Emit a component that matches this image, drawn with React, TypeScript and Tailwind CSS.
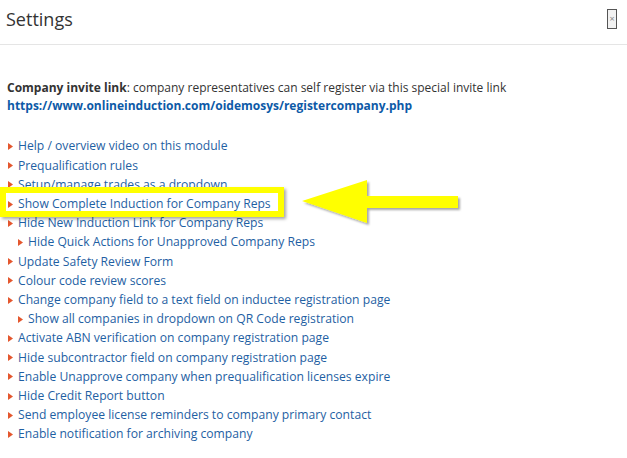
import React from "react";

type Item = { text: string; sub?: boolean };

const items: Item[] = [
  { text: "Help / overview video on this module" },
  { text: "Prequalification rules" },
  { text: "Setup/manage trades as a dropdown" },
  { text: "Show Complete Induction for Company Reps" },
  { text: "Hide New Induction Link for Company Reps" },
  { text: "Hide Quick Actions for Unapproved Company Reps", sub: true },
  { text: "Update Safety Review Form" },
  { text: "Colour code review scores" },
  { text: "Change company field to a text field on inductee registration page" },
  { text: "Show all companies in dropdown on QR Code registration", sub: true },
  { text: "Activate ABN verification on company registration page" },
  { text: "Hide subcontractor field on company registration page" },
  { text: "Enable Unapprove company when prequalification licenses expire" },
  { text: "Hide Credit Report button" },
  { text: "Send employee license reminders to company primary contact" },
  { text: "Enable notification for archiving company" },
];

function Bullet() {
  return (
    <svg width="5" height="7" viewBox="0 0 5 7" className="shrink-0">
      <polygon points="0,0 5,3.5 0,7" fill="#e4572e" />
    </svg>
  );
}

export default function App() {
  return (
    <div
      className="relative w-[627px] h-[458px] bg-white overflow-hidden text-[#333]"
      style={{ fontFamily: '"Open Sans", "Noto Sans", sans-serif' }}
    >
      <div className="h-[45px] border-b border-[#e5e5e5] flex items-center justify-between pl-[6px] pr-[10px]">
        <div className="text-[18px] leading-none -mt-[7px]">Settings</div>
        <div className="w-[10px] h-[20px] border border-[#555] bg-[#f2f2f2] flex items-center justify-center text-[9px] text-[#888] leading-none -mt-[7px]">
          ×
        </div>
      </div>
      <div className="pl-[7px] pt-[34px]">
        <div className="text-[12px] leading-[18px]">
          <span className="font-bold">Company invite link</span>: company representatives can self register via this special invite link
        </div>
        <div className="text-[12px] leading-[18px] font-bold text-[#0d5aa7]">
          https://www.onlineinduction.com/oidemosys/registercompany.php
        </div>
        <div className="mt-[22px] flex flex-col">
          {items.map((it, i) => (
            <div
              key={i}
              className={`flex items-center gap-[5px] h-[19.2px] text-[12.15px] text-[#1f5fa3] ${it.sub ? "pl-[11px]" : "pl-[1px]"}`}
            >
              <Bullet />
              <span className="whitespace-nowrap">{it.text}</span>
            </div>
          ))}
        </div>
      </div>

      {/* highlight box */}
      <div className="absolute left-[0px] top-[187px] w-[284px] h-[30px] border-[6px] border-[#ffff00] shadow-[2px_2px_3px_rgba(0,0,0,0.35)]" />

      {/* arrow */}
      <svg
        className="absolute left-[298px] top-[176px]"
        width="164"
        height="52"
        viewBox="0 0 164 52"
      >
        <defs>
          <filter id="sh" x="-10%" y="-20%" width="130%" height="150%">
            <feDropShadow dx="2" dy="2" stdDeviation="1.2" floodColor="#000" floodOpacity="0.35" />
          </filter>
        </defs>
        <polygon
          points="4,25 69,4 69,20 160,20 160,32 69,32 69,47"
          fill="#ffff00"
          filter="url(#sh)"
        />
      </svg>
    </div>
  );
}
